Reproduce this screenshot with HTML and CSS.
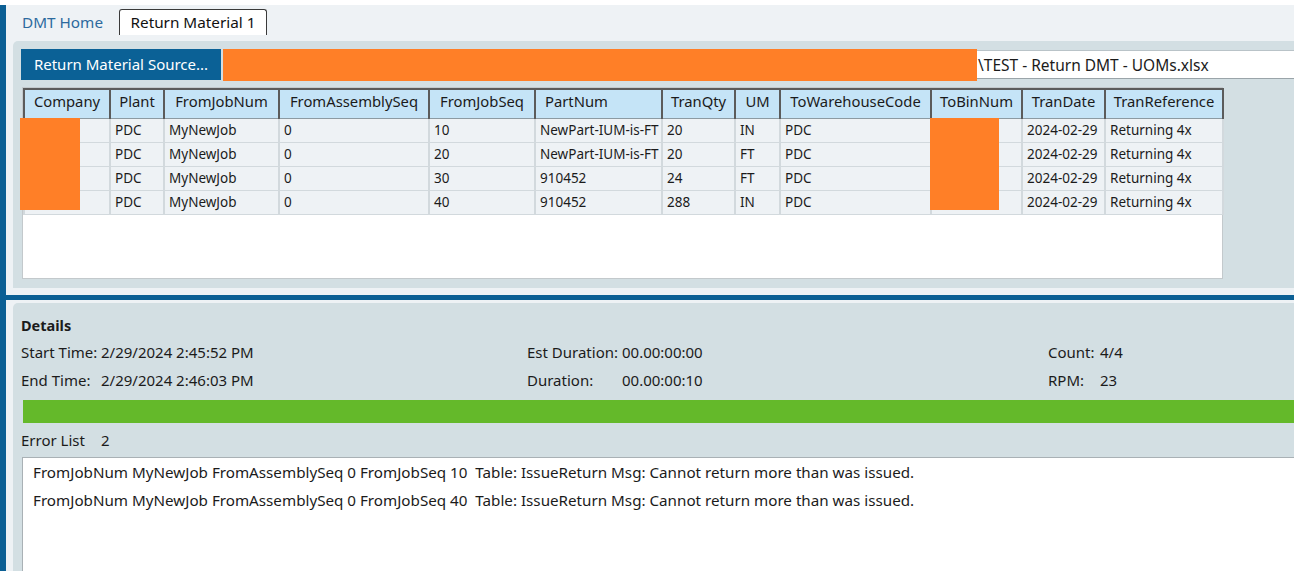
FILE: index.html
```html
<!DOCTYPE html>
<html>
<head>
<meta charset="utf-8">
<link rel="stylesheet" href="styles.css">
</head>
<body>
<div class="app">
  <div class="rail"></div>
  <div class="main">
    <div class="tabs">
      <span class="tab-link">DMT Home</span>
      <span class="tab-active">Return Material 1</span>
    </div>
    <div class="panel-top">
      <div class="source-row">
        <div class="btn">Return Material Source...</div>
        <div class="redact-wide"></div>
        <div class="path-box">\TEST - Return DMT - UOMs.xlsx</div>
      </div>
      <div class="grid-wrap">
        <table class="grid">
          <colgroup>
            <col class="c1"><col class="c2"><col class="c3"><col class="c4"><col class="c5"><col class="c6">
            <col class="c7"><col class="c8"><col class="c9"><col class="c10"><col class="c11"><col class="c12">
          </colgroup>
          <thead>
            <tr>
              <th>Company</th><th>Plant</th><th>FromJobNum</th><th>FromAssemblySeq</th><th>FromJobSeq</th><th class="th-left">PartNum</th>
              <th>TranQty</th><th>UM</th><th>ToWarehouseCode</th><th>ToBinNum</th><th>TranDate</th><th>TranReference</th>
            </tr>
          </thead>
          <tbody>
            <tr><td></td><td>PDC</td><td>MyNewJob</td><td>0</td><td>10</td><td>NewPart-IUM-is-FT</td><td>20</td><td>IN</td><td>PDC</td><td></td><td>2024-02-29</td><td>Returning 4x</td></tr>
            <tr><td></td><td>PDC</td><td>MyNewJob</td><td>0</td><td>20</td><td>NewPart-IUM-is-FT</td><td>20</td><td>FT</td><td>PDC</td><td></td><td>2024-02-29</td><td>Returning 4x</td></tr>
            <tr><td></td><td>PDC</td><td>MyNewJob</td><td>0</td><td>30</td><td>910452</td><td>24</td><td>FT</td><td>PDC</td><td></td><td>2024-02-29</td><td>Returning 4x</td></tr>
            <tr><td></td><td>PDC</td><td>MyNewJob</td><td>0</td><td>40</td><td>910452</td><td>288</td><td>IN</td><td>PDC</td><td></td><td>2024-02-29</td><td>Returning 4x</td></tr>
          </tbody>
        </table>
        <div class="redact redact-company"></div>
        <div class="redact redact-bin"></div>
      </div>
    </div>
    <div class="splitter"></div>
    <div class="panel-bottom">
      <div class="details-title">Details</div>
      <div class="stats">
        <div class="stat"><span class="lbl w80">Start Time:</span><span>2/29/2024 2:45:52 PM</span></div>
        <div class="stat"><span class="lbl w95">Est Duration:</span><span>00.00:00:00</span></div>
        <div class="stat"><span class="lbl w52">Count:</span><span>4/4</span></div>
        <div class="stat"><span class="lbl w80">End Time:</span><span>2/29/2024 2:46:03 PM</span></div>
        <div class="stat"><span class="lbl w95">Duration:</span><span>00.00:00:10</span></div>
        <div class="stat"><span class="lbl w52">RPM:</span><span>23</span></div>
      </div>
      <div class="progress"></div>
      <div class="error-label"><span class="lbl w80">Error List</span><span>2</span></div>
      <div class="error-box">
        <div class="err">FromJobNum MyNewJob FromAssemblySeq 0 FromJobSeq 10&nbsp; Table: IssueReturn Msg: Cannot return more than was issued.</div>
        <div class="err">FromJobNum MyNewJob FromAssemblySeq 0 FromJobSeq 40&nbsp; Table: IssueReturn Msg: Cannot return more than was issued.</div>
      </div>
    </div>
  </div>
</div>
</body>
</html>
```

FILE: styles.css
```css
* { box-sizing: border-box; }
html, body { margin: 0; padding: 0; }
body {
  font-family: "Noto Sans", "Open Sans", sans-serif;
  color: #1b1b1b;
  background: #ffffff;
  width: 1294px;
  height: 571px;
  overflow: hidden;
}
.app {
  margin-top: 5px;
  display: flex;
  height: 566px;
}
.rail {
  width: 6px;
  background: #0b5f94;
  flex: none;
}
.main {
  flex: 1;
  background: #eef2f5;
  display: flex;
  flex-direction: column;
  min-width: 0;
}
.tabs {
  height: 36px;
  display: flex;
  align-items: flex-start;
  padding-left: 16px;
  padding-top: 4px;
  flex: none;
}
.tab-link {
  font-size: 15.3px;
  color: #2c6a9e;
  line-height: 26px;
  width: 97px;
  white-space: nowrap;
}
.tab-active {
  font-size: 15.3px;
  line-height: 24px;
  height: 26px;
  width: 148px;
  padding: 0;
  text-align: center;
  white-space: nowrap;
  background: #ffffff;
  border: 1px solid #3a3a3a;
  border-bottom: none;
  border-radius: 3px 3px 0 0;
  color: #111;
}
.panel-top {
  margin-left: 7px;
  background: #d3dfe3;
  border-top-left-radius: 5px;
  padding: 8px 0 9px 8px;
  flex: none;
}
.source-row {
  display: flex;
  height: 32px;
}
.btn {
  width: 200px;
  height: 31px;
  background: #0b6196;
  color: #ffffff;
  font-size: 15px;
  line-height: 31px;
  text-align: center;
  white-space: nowrap;
  flex: none;
}
.redact-wide {
  width: 754px;
  height: 32px;
  margin-left: 2px;
  background: #ff7f27;
  flex: none;
}
.path-box {
  flex: 1;
  height: 29px;
  margin-top: 1px;
  background: #ffffff;
  border-top: 1px solid #b9c3c8;
  border-bottom: 1px solid #9aa4a9;
  font-size: 15.5px;
  line-height: 29px;
  padding-left: 1px;
  white-space: nowrap;
  color: #1b1b1b;
}
.grid-wrap {
  position: relative;
  margin-top: 6px;
  margin-left: 1px;
  width: 1201px;
  height: 192px;
  background: #ffffff;
  border: 1px solid #c3c9cc;
}
.grid {
  border-collapse: collapse;
  table-layout: fixed;
  width: 1199px;
}
.c1 { width: 86px; } .c2 { width: 54px; } .c3 { width: 115px; } .c4 { width: 150px; }
.c5 { width: 106px; } .c6 { width: 127px; } .c7 { width: 73px; } .c8 { width: 45px; }
.c9 { width: 151px; } .c10 { width: 91px; } .c11 { width: 83px; } .c12 { width: 118px; }
.grid th {
  height: 29px;
  background: #c5e4f7;
  border: 2px solid #5b5b5b;
  border-bottom: 1px solid #8c9aa2;
  font-weight: normal;
  font-size: 14.8px;
  color: #1b1b1b;
  text-align: center;
  padding: 0 0 6px 0;
  white-space: nowrap;
  overflow: hidden;
}
.grid th.th-left {
  text-align: left;
  padding-left: 9px;
}
.grid td {
  height: 24px;
  background: #eef2f5;
  border: 1px solid #d2d9dd;
  border-width: 1px 2px;
  font-size: 13.5px;
  padding: 0 0 0 4px;
  white-space: nowrap;
  overflow: hidden;
}
.redact {
  position: absolute;
  background: #ff7f27;
  top: 30px;
  height: 92px;
}
.redact-company { left: -3px; width: 60px; }
.redact-bin { left: 907px; width: 69px; }
.splitter {
  height: 15px;
  flex: none;
  background: linear-gradient(#eef2f5 0 7px, #0b5f94 7px 12px, #eef2f5 12px);
}
.panel-bottom {
  flex: 1;
  margin-left: 7px;
  background: #d3dfe3;
  border-top-left-radius: 5px;
  padding: 9px 0 0 8px;
  display: flex;
  flex-direction: column;
  min-height: 0;
}
.details-title {
  font-weight: bold;
  font-size: 14.5px;
  line-height: 26px;
}
.stats {
  display: grid;
  grid-template-columns: 506px 521px 1fr;
  font-size: 15px;
  line-height: 28px;
}
.stat { display: flex; white-space: nowrap; }
.lbl { display: inline-block; flex: none; }
.w80 { width: 80px; }
.w95 { width: 95px; }
.w52 { width: 52px; }
.progress {
  margin-top: 6px;
  margin-left: 2px;
  height: 23px;
  background: #64b92a;
  flex: none;
}
.error-label {
  margin-top: 4px;
  font-size: 15px;
  line-height: 26px;
  display: flex;
}
.error-box {
  flex: 1;
  margin-top: 4px;
  margin-left: 1px;
  background: #ffffff;
  border: 1px solid #a9b1b5;
  border-right: none;
  border-bottom: none;
  padding-left: 10px;
}
.err {
  font-size: 15.2px;
  line-height: 28px;
  white-space: nowrap;
}
```
